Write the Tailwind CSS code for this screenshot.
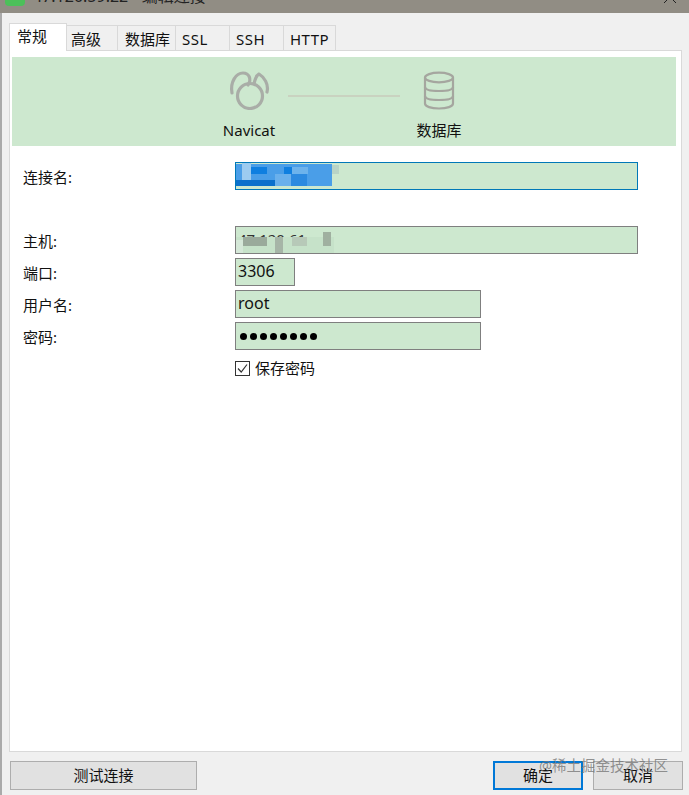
<!DOCTYPE html>
<html lang="zh">
<head>
<meta charset="utf-8">
<script src="https://cdn.jsdelivr.net/npm/@tailwindcss/browser@4"></script>
</head>
<body class="m-0">
<div class="relative w-[689px] h-[795px] overflow-hidden bg-[#f0f0f0] text-[15px] text-[#111] font-['Noto_Sans','Noto_Sans_CJK_SC',sans-serif] flex flex-col">
  <div class="h-[13px] shrink-0 bg-[#918d84] flex items-start overflow-hidden relative">
    <div class="w-[20px] h-[20px] ml-[5px] mt-[-14px] rounded-[4px] bg-[#4cc05a] shrink-0"></div>
    <span class="ml-[8px] text-[16px] leading-[20px] mt-[-14px] text-[#222] whitespace-nowrap">47.120.59.22 - 编辑连接</span>
    <svg class="absolute right-[12px] top-[-10px]" width="14" height="14" viewBox="0 0 14 14" fill="none" stroke="#222" stroke-width="1"><path d="M1 1l12 12M13 1L1 13"/></svg>
  </div>
  <div class="flex-1 flex flex-col pl-[7px] pr-[7px] border-l-2 border-[#aaa]">
    <div class="flex h-[28px] mt-[10px] items-end relative z-10 mb-[-1px]">
      <div class="w-[58px] h-[28px] shrink-0 bg-white border border-b-0 border-[#d9d9d9] pl-[7px] pt-[2px] leading-[20px]">常规</div>
      <div class="w-[51px] h-[26px] shrink-0 bg-[#f0f0f0] border border-l-0 border-[#d9d9d9] pl-[4px] pt-[1px] leading-[24px]">高级</div>
      <div class="w-[58px] h-[26px] shrink-0 bg-[#f0f0f0] border border-l-0 border-[#d9d9d9] pl-[7px] pt-[1px] leading-[24px] whitespace-nowrap">数据库</div>
      <div class="w-[54px] h-[26px] shrink-0 bg-[#f0f0f0] border border-l-0 border-[#d9d9d9] pl-[6px] pt-[1px] leading-[24px] tracking-[0.5px]">SSL</div>
      <div class="w-[54px] h-[26px] shrink-0 bg-[#f0f0f0] border border-l-0 border-[#d9d9d9] pl-[6px] pt-[1px] leading-[24px] tracking-[0.5px]">SSH</div>
      <div class="w-[52px] h-[26px] shrink-0 bg-[#f0f0f0] border border-l-0 border-[#d9d9d9] pl-[6px] pt-[1px] leading-[24px] tracking-[0.5px]">HTTP</div>
    </div>
    <div class="h-[702px] shrink-0 bg-white border border-[#d9d9d9] pt-[6px] pl-[2px] pr-[5px] flex flex-col">
      <div class="h-[89px] shrink-0 bg-[#cde8cf] flex pl-[197px]">
        <div class="w-[80px] flex flex-col items-center shrink-0 relative z-10">
          <svg class="mt-[3px] shrink-0" width="68" height="50" viewBox="0 0 68 50" fill="none" stroke="#a9ada7" stroke-width="3.200" stroke-linecap="round" stroke-linejoin="round">
            <circle cx="35" cy="36" r="12.500"/>
            <path d="M17 33C15 22 21 13 28 13C34 13 37 19 33 25"/>
            <path d="M39 24C40 19 42 15 44 14C49 17 54 24 52 32"/>
          </svg>
          <span class="mt-[10px] leading-[20px] whitespace-nowrap">Navicat</span>
        </div>
        <div class="w-[112px] h-[2px] mt-[38px] bg-[#c9d2c0] ml-[-1px] shrink-0"></div>
        <div class="w-[80px] ml-[-1px] flex flex-col items-center shrink-0">
          <svg class="mt-[14px] shrink-0" width="32" height="40" viewBox="0 0 32 40" fill="none" stroke="#a5a69f" stroke-width="2.200">
            <ellipse cx="16" cy="6.500" rx="14" ry="4.800"/>
            <path d="M2 6.500v26c0 3 6 5 14 5s14-2 14-5v-26"/>
            <path d="M2 16c0 3 6 4 14 4s14-1 14-4M2 25c0 3 6 4 14 4s14-1 14-4"/>
          </svg>
          <span class="mt-[9px] leading-[20px] whitespace-nowrap">数据库</span>
        </div>
      </div>
      <div class="flex flex-col pl-[11px] mt-[16px]">
        <div class="flex items-center h-[28px]">
          <label class="w-[212px] shrink-0 leading-[20px] pt-[2px]">连接名:</label>
          <div class="relative w-[403px] h-[28px] bg-[#cde8cf] border border-[#0078b8] overflow-hidden">
            <div class="absolute left-0 top-[1px] w-[96px] h-[22px] bg-[#4a9ee8]"></div>
            <div class="absolute left-0 top-[17px] w-[40px] h-[6px] bg-[#0a70cc]"></div>
            <div class="absolute left-[6px] top-0 w-[9px] h-[17px] bg-[#9ccbf0]"></div>
            <div class="absolute left-[15px] top-[4px] w-[16px] h-[7px] bg-[#0f7fe0]"></div>
            <div class="absolute left-[48px] top-[4px] w-[8px] h-[7px] bg-[#0f7fe0]"></div>
            <div class="absolute left-[56px] top-[4px] w-[16px] h-[7px] bg-[#6db3ec]"></div>
            <div class="absolute left-[39px] top-[11px] w-[16px] h-[12px] bg-[#6ab0ec]"></div>
            <div class="absolute left-[55px] top-[11px] w-[16px] h-[12px] bg-[#2c8ae0]"></div>
            <div class="absolute left-[96px] top-[2px] w-[7px] h-[9px] bg-[#b9d4c6]"></div>
          </div>
        </div>
        <div class="flex items-center h-[28px] mt-[36px]">
          <label class="w-[212px] shrink-0 leading-[20px] pt-[2px]">主机:</label>
          <div class="relative w-[403px] h-[28px] bg-[#cde8cf] border border-[#7f7f7f] overflow-hidden">
            <span class="absolute left-[2px] top-[2px] text-[#333] leading-[20px] whitespace-nowrap">47.120.61</span>
            <div class="absolute left-0 top-[10px] w-[98px] h-[16px] bg-[#c6e2c9]"></div>
            <div class="absolute left-0 top-[13px] w-[7px] h-[13px] bg-[#d5e8d8]"></div>
            <div class="absolute left-[7px] top-[10px] w-[24px] h-[9px] bg-[#9aaa9b]"></div>
            <div class="absolute left-[39px] top-[10px] w-[8px] h-[16px] bg-[#a6b5a7]"></div>
            <div class="absolute left-[56px] top-[10px] w-[15px] h-[9px] bg-[#b7c9b8]"></div>
            <div class="absolute left-[87px] top-[5px] w-[8px] h-[14px] bg-[#a0b0a0]"></div>
          </div>
        </div>
        <div class="flex items-center h-[28px] mt-[4px]">
          <label class="w-[212px] shrink-0 leading-[20px] pt-[2px]">端口:</label>
          <div class="w-[60px] h-[28px] bg-[#cde8cf] border border-[#7f7f7f] pl-[2px] leading-[25px] text-[16px]">3306</div>
        </div>
        <div class="flex items-center h-[28px] mt-[4px]">
          <label class="w-[212px] shrink-0 leading-[20px] pt-[2px]">用户名:</label>
          <div class="w-[246px] h-[28px] bg-[#cde8cf] border border-[#7f7f7f] pl-[2px] leading-[25px] text-[16px]">root</div>
        </div>
        <div class="flex items-center h-[28px] mt-[4px]">
          <label class="w-[212px] shrink-0 leading-[20px] pt-[2px]">密码:</label>
          <div class="w-[246px] h-[28px] bg-[#cde8cf] border border-[#7f7f7f] pl-[4px] flex items-center gap-[3px]">
            <i class="block w-[7px] h-[7px] rounded-full bg-black"></i><i class="block w-[7px] h-[7px] rounded-full bg-black"></i><i class="block w-[7px] h-[7px] rounded-full bg-black"></i><i class="block w-[7px] h-[7px] rounded-full bg-black"></i><i class="block w-[7px] h-[7px] rounded-full bg-black"></i><i class="block w-[7px] h-[7px] rounded-full bg-black"></i><i class="block w-[7px] h-[7px] rounded-full bg-black"></i><i class="block w-[7px] h-[7px] rounded-full bg-black"></i>
          </div>
        </div>
        <div class="flex items-center h-[20px] mt-[8px] pl-[212px]">
          <div class="w-[15px] h-[15px] border border-[#333] bg-white flex items-center justify-center">
            <svg width="13" height="13" viewBox="0 0 13 13" fill="none" stroke="#333" stroke-width="1.200"><path d="M2 6.500l3.200 3.500L11 2.500"/></svg>
          </div>
          <span class="ml-[5px] leading-[20px] whitespace-nowrap">保存密码</span>
        </div>
      </div>
    </div>
    <div class="flex mt-[9px] h-[29px]">
      <button class="w-[187px] h-[29px] shrink-0 ml-[1px] bg-[#e1e1e1] border border-[#adadad] text-center">测试连接</button>
      <button class="w-[90px] h-[29px] shrink-0 ml-[296px] bg-[#e1e1e1] border-2 border-[#0078d7] text-center">确定</button>
      <button class="w-[90px] h-[29px] shrink-0 ml-[10px] bg-[#e1e1e1] border border-[#adadad] text-center">取消</button>
    </div>
    <div class="absolute right-[21px] top-[756px] text-[#777]/80 text-[14.500px] leading-[18px] whitespace-nowrap">@稀土掘金技术社区</div>
  </div>
</div>
</body>
</html>
